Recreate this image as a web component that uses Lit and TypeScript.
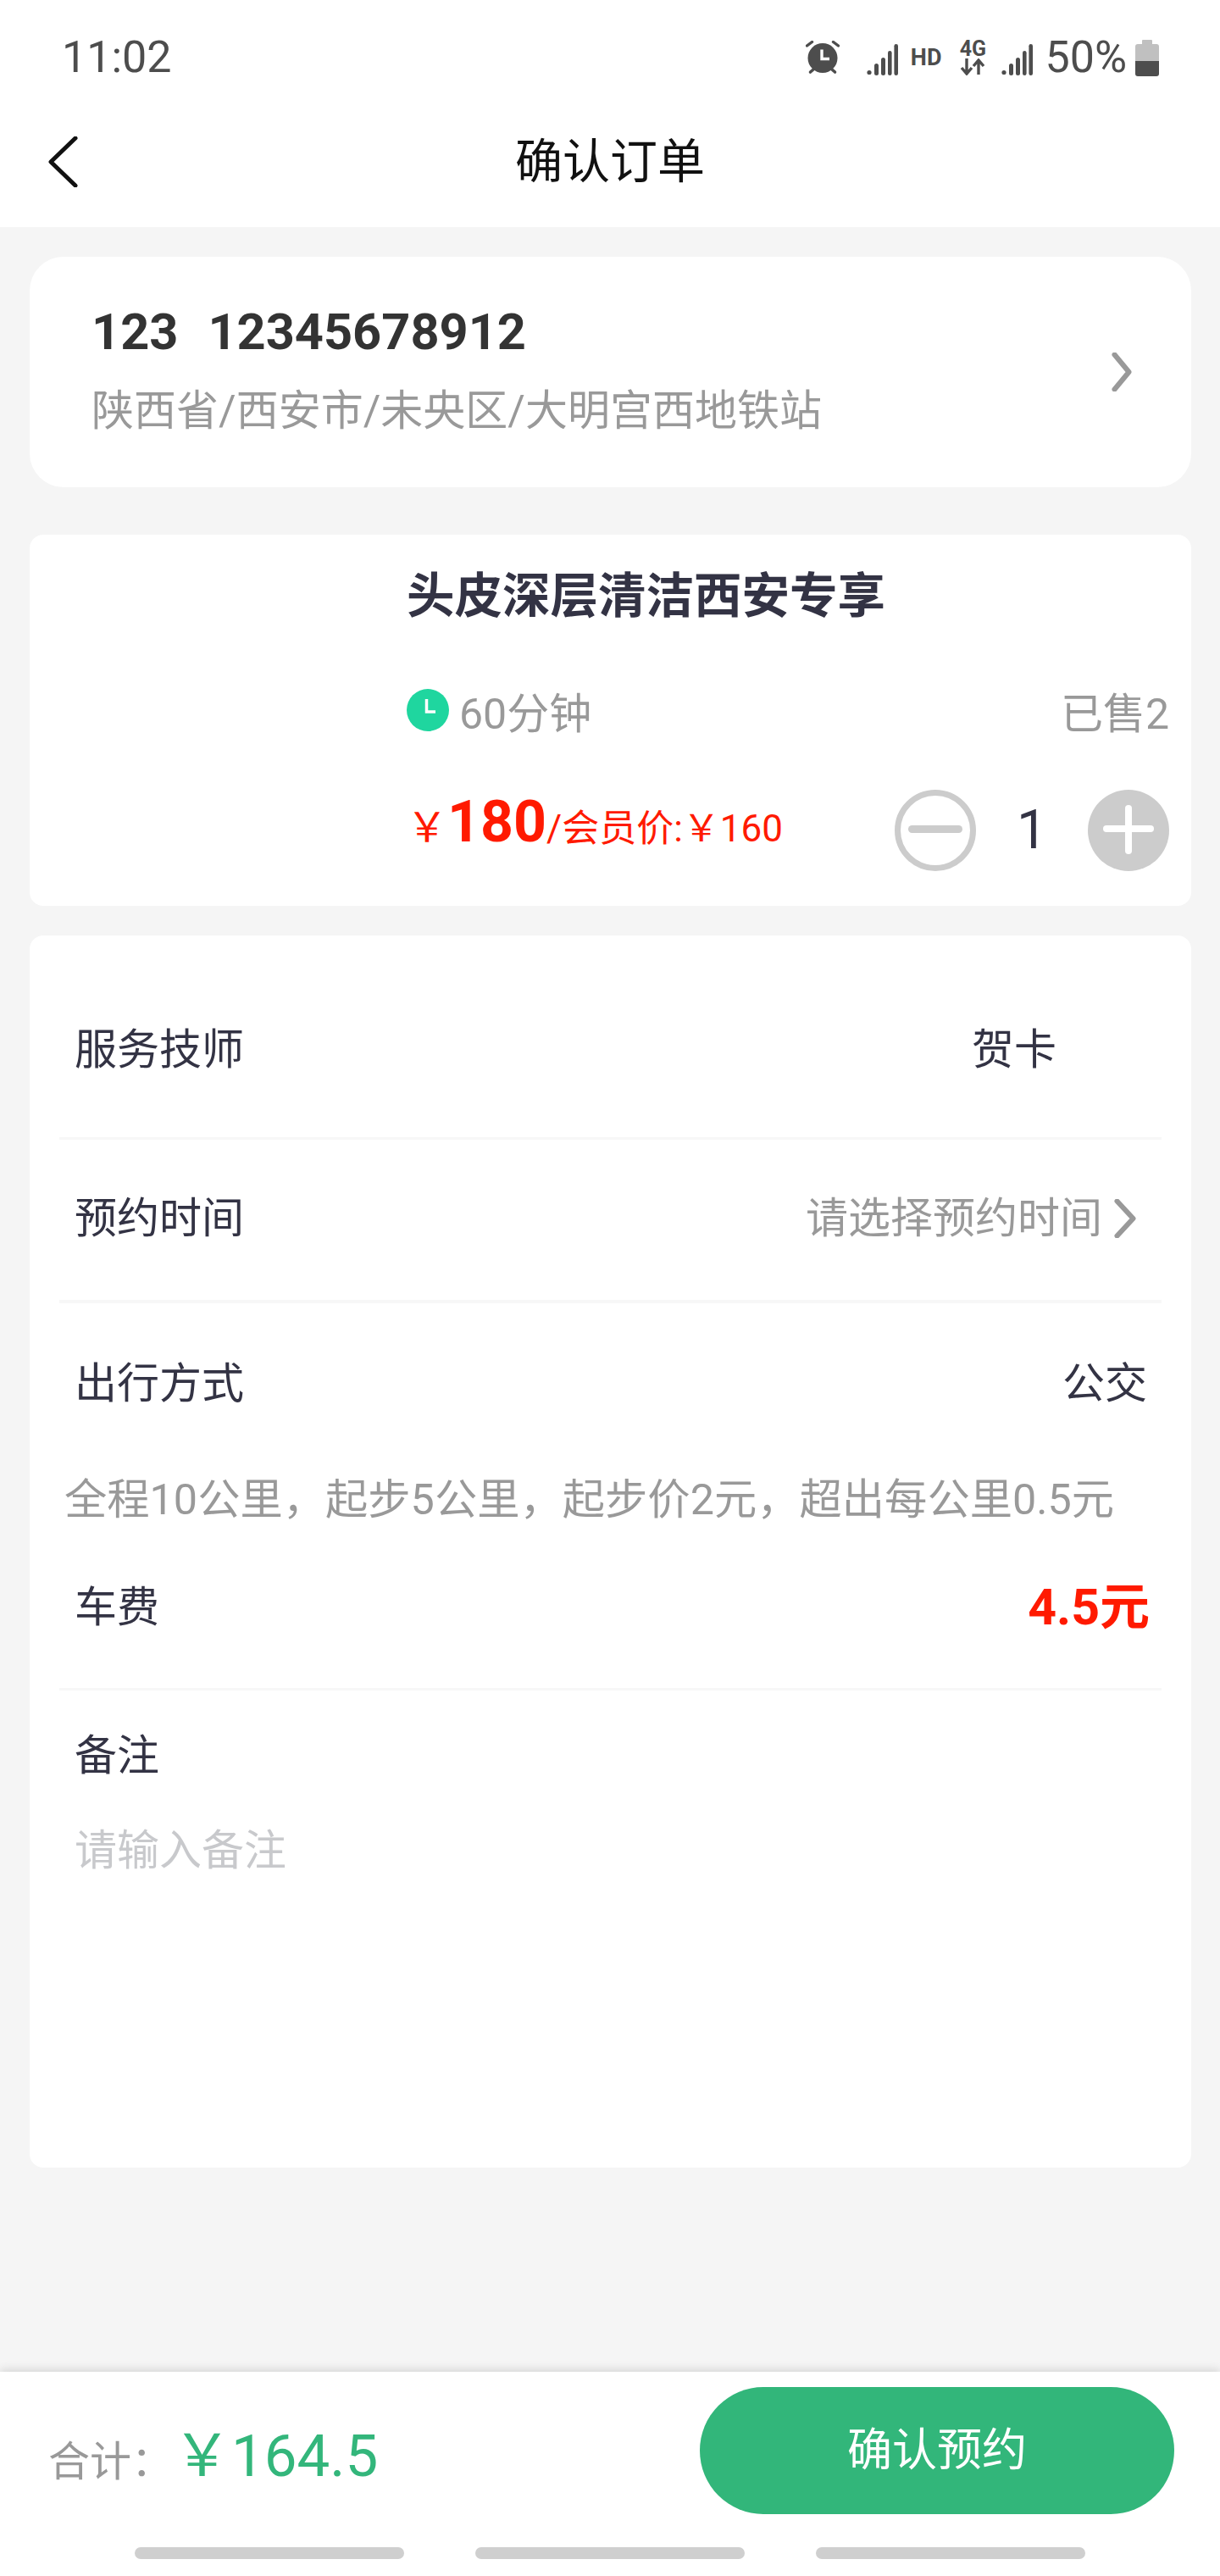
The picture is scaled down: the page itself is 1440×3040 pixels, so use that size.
import { LitElement, html, css } from "lit";
import { customElement } from "lit/decorators.js";

const signal = html`<svg class="signal" viewBox="0 0 37 37" width="37" height="37"><g fill="#4d4d4d"><circle cx="3" cy="33.5" r="2.6"/><rect x="9" y="23" width="5" height="14" rx="2.5"/><rect x="17" y="16" width="5" height="21" rx="2.5"/><rect x="25" y="8" width="4.6" height="29" rx="2.3"/><rect x="32.4" y="0" width="4.6" height="37" rx="2.3"/></g></svg>`;

@customElement("app-root")
export class AppRoot extends LitElement {
  static styles = css`
    :host {
      display: flex;
      flex-direction: column;
      width: 1440px;
      height: 3040px;
      background: #f5f5f5;
      font-family: Roboto, "Noto Sans CJK SC", sans-serif;
      color: #333344;
      overflow: hidden;
    }
    .top { background: #fff; height: 268px; flex: none; }
    .status {
      height: 132px;
      padding: 2px 72px 0 73px;
      display: flex;
      align-items: center;
      justify-content: space-between;
      color: #4d4d4d;
    }
    .time { font-size: 52px; line-height: 60px; }
    .status-right { display: flex; align-items: center; }
    .alarm { margin-right: 32px; }
    .signal { margin-top: 4px; }
    .hd { font-size: 27px; font-weight: 700; margin: 0 22px 0 15px; line-height: 30px; }
    .net { display: flex; flex-direction: column; align-items: center; width: 30px; margin-right: 19px; }
    .net span { font-size: 25px; font-weight: 700; line-height: 22px; }
    .pct { font-size: 52px; line-height: 60px; margin: 0 10px 0 14px; }
    .nav { height: 114px; padding-bottom: 20px; display: flex; align-items: center; justify-content: center; position: relative; }
    .nav h1 { margin: 0; font-size: 56px; font-weight: 400; color: #111; line-height: 80px; }
    .back { position: absolute; left: 56px; top: 27px; }
    main { flex: 1; padding: 35px 34px 0 35px; display: flex; flex-direction: column; }
    .card { background: #fff; border-radius: 16px; }
    .addr {
      border-radius: 40px;
      height: 272px;
      padding: 0 70px 0 73px;
      display: flex;
      align-items: center;
      justify-content: space-between;
    }
    .addr .name { font-size: 59.5px; font-weight: 700; color: #333; line-height: 70px; margin-top: -1px; display: flex; gap: 35px; }
    .addr .place { font-size: 50px; color: #999; line-height: 70px; margin-top: 23px; }
    .svc {
      box-sizing: border-box;
      margin-top: 56px;
      height: 438px;
      padding: 33px 26px 0 445px;
      display: flex;
      flex-direction: column;
    }
    .svc h2 { margin: 0; font-size: 56.5px; font-weight: 700; color: #333344; line-height: 80px; }
    .meta { display: flex; justify-content: space-between; align-items: center; margin-top: 64px; font-size: 50px; color: #999; line-height: 70px; height: 70px; }
    .dur { display: flex; align-items: center; gap: 12px; }
    .dur svg { margin-top: -10px; }
    .buy { display: flex; justify-content: space-between; align-items: center; margin-top: 54px; height: 96px; }
    .price { color: #ff1a00; font-size: 44px; line-height: 84px; margin-bottom: 12px; display: flex; align-items: baseline; }
    .price .yen { font-size: 48px; }
    .price b { font-size: 68px; font-weight: 700; }
    .stepper { display: flex; align-items: center; }
    .qty { width: 132px; text-align: center; font-size: 64px; line-height: 80px; color: #333344; }
    .form { box-sizing: border-box; margin-top: 35px; height: 1454px; padding: 34px 35px 0; }
    .row { display: flex; justify-content: space-between; align-items: center; font-size: 50px; line-height: 70px; padding: 0 17px 0 18px; }
    .r1 { height: 202px; padding-bottom: 2px; padding-right: 124px; border-bottom: 3px solid #f7f7f7; }
    .r2 { height: 185px; padding-bottom: 4px; padding-right: 30px; border-bottom: 4px solid #f7f7f7; }
    .r3 { height: 182px; padding-top: 4px; }
    .muted { color: #999; display: flex; align-items: center; gap: 14px; font-size: 50px; }
    .note { color: #999; font-size: 50.3px; line-height: 70px; padding-left: 6px; margin-top: 11px; white-space: nowrap; }
    .r4 { height: 70px; margin-top: 57px; padding-bottom: 60px; padding-right: 14px; border-bottom: 3px solid #f7f7f7; }
    .fee { color: #ff1a00; font-weight: 700; font-size: 59px; }
    .r5 { height: 70px; margin-top: 42px; }
    .ph { color: #c8c9cc; font-size: 50px; line-height: 70px; padding-left: 18px; margin-top: 42px; }
    .bottom { flex: none; height: 223px; padding-top: 18px; background: #fff; box-shadow: 0 -3px 10px rgba(0, 0, 0, 0.12); display: flex; flex-direction: column; }
    .sum { height: 150px; display: flex; align-items: center; justify-content: space-between; padding: 0 54px 0 57px; }
    .total { display: flex; align-items: baseline; color: #999; font-size: 49px; }
    .total b { font-weight: 400; color: #33b67b; font-size: 69px; }
    .btn { width: 560px; height: 150px; border-radius: 75px; background: #32b67a; color: #fff; font-size: 53px; display: flex; align-items: center; justify-content: center; line-height: 80px; }
    .pills { display: flex; justify-content: center; gap: 84px; margin-top: 39px; }
    .pills i { display: block; width: 318px; height: 14px; border-radius: 7px; background: #cfcfcf; }
  `;

  private chev(w: number, h: number, color: string) {
    return html`<svg viewBox="0 0 ${w} ${h}" width="${w}" height="${h}"><path d="M3.5 2.5 L${w - 3.5} ${h / 2} L3.5 ${h - 2.5}" fill="none" stroke="${color}" stroke-width="6" stroke-linecap="round" stroke-linejoin="round"/></svg>`;
  }

  render() {
    return html`
      <div class="top">
        <div class="status">
          <span class="time">11:02</span>
          <div class="status-right">
            <svg class="alarm" viewBox="0 0 40 40" width="40" height="40">
              <g fill="none" stroke="#4d4d4d" stroke-linecap="round">
                <path d="M1.5 6 L7.5 1.5 M38.5 6 L32.5 1.5" stroke-width="3.4"/>
                <path d="M5.5 37 L9 34 M34.5 37 L31 34" stroke-width="3.6"/>
              </g>
              <circle cx="20" cy="20.5" r="17.5" fill="#4d4d4d"/>
              <path d="M19 10.5 V21.5 H28" fill="none" stroke="#fff" stroke-width="3.4"/>
            </svg>
            ${signal}
            <span class="hd">HD</span>
            <div class="net">
              <span>4G</span>
              <svg viewBox="0 0 30 20" width="30" height="20"><path d="M8 0 V17 M2 11 L8 18 L14 11 M22 19 V3 M16 9 L22 2 L28 9" fill="none" stroke="#4d4d4d" stroke-width="3.4"/></svg>
            </div>
            ${signal}
            <span class="pct">50%</span>
            <svg viewBox="0 0 28 43" width="28" height="43">
              <path d="M9 0 H19 Q20 0 20 1 V5 H25 Q28 5 28 8 V25 H0 V8 Q0 5 3 5 H8 V1 Q8 0 9 0 Z" fill="#c0c0c0"/>
              <path d="M0 25 H28 V40 Q28 43 25 43 H3 Q0 43 0 40 Z" fill="#4d4d4d"/>
            </svg>
          </div>
        </div>
        <div class="nav">
          <svg class="back" viewBox="0 0 36 60" width="36" height="60"><path d="M33 2 L4 30 L33 58" fill="none" stroke="#111" stroke-width="5" stroke-linejoin="round" stroke-linecap="round"/></svg>
          <h1>确认订单</h1>
        </div>
      </div>
      <main>
        <section class="card addr">
          <div>
            <div class="name"><span>123</span><span>12345678912</span></div>
            <div class="place">陕西省/西安市/未央区/大明宫西地铁站</div>
          </div>
          ${this.chev(24, 46, "#999")}
        </section>
        <section class="card svc">
          <h2>头皮深层清洁西安专享</h2>
          <div class="meta">
            <span class="dur">
              <svg viewBox="0 0 50 50" width="50" height="50"><circle cx="25" cy="25" r="25" fill="#1fd69f"/><path d="M23.5 12 V27 H34" fill="none" stroke="#fff" stroke-width="3.5"/></svg>
              60分钟
            </span>
            <span>已售2</span>
          </div>
          <div class="buy">
            <div class="price"><span class="yen">￥</span><b>180</b><span>/会员价:￥160</span></div>
            <div class="stepper">
              <svg viewBox="0 0 96 96" width="96" height="96"><circle cx="48" cy="48" r="44.5" fill="none" stroke="#ccc" stroke-width="7"/><rect x="16" y="42" width="64" height="9" rx="4.5" fill="#ccc"/></svg>
              <span class="qty">1</span>
              <svg viewBox="0 0 96 96" width="96" height="96"><circle cx="48" cy="48" r="48" fill="#ccc"/><rect x="18" y="42" width="60" height="8" rx="4" fill="#fff"/><rect x="44" y="18" width="8" height="58" rx="4" fill="#fff"/></svg>
            </div>
          </div>
        </section>
        <section class="card form">
          <div class="row r1"><span>服务技师</span><span>贺卡</span></div>
          <div class="row r2"><span>预约时间</span><span class="muted">请选择预约时间 ${this.chev(26, 46, "#999")}</span></div>
          <div class="row r3"><span>出行方式</span><span>公交</span></div>
          <div class="note">全程10公里，起步5公里，起步价2元，超出每公里0.5元</div>
          <div class="row r4"><span>车费</span><span class="fee">4.5元</span></div>
          <div class="row r5"><span>备注</span></div>
          <div class="ph">请输入备注</div>
        </section>
      </main>
      <footer class="bottom">
        <div class="sum">
          <div class="total">合计：<b>￥164.5</b></div>
          <div class="btn">确认预约</div>
        </div>
        <div class="pills"><i></i><i></i><i></i></div>
      </footer>
    `;
  }
}
